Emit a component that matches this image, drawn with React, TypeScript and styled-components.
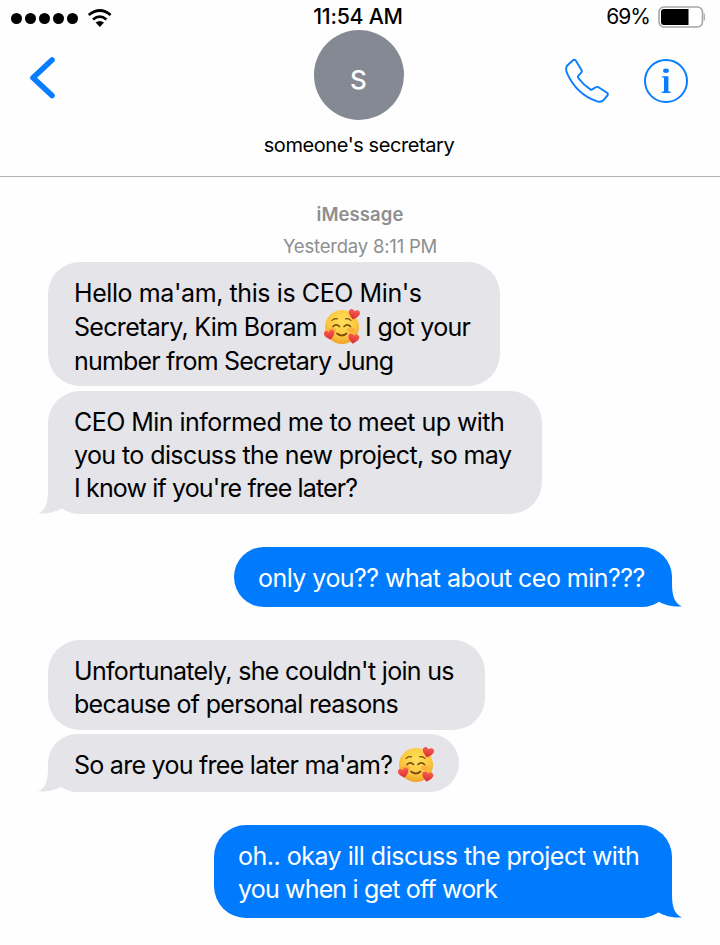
import React from "react";
import styled, { createGlobalStyle } from "styled-components";

const GlobalStyle = createGlobalStyle`
  body { margin: 0; background: #fefefe; }
  * { box-sizing: border-box; }
`;

const Screen = styled.main`
  width: 720px;
  height: 945px;
  overflow: hidden;
  background: #fefefe;
  color: #000;
  font-family: Inter, "Liberation Sans", sans-serif;
`;

const Header = styled.header`
  height: 177px;
  border-bottom: 1px solid #b2b2b2;
`;

const StatusBar = styled.div`
  display: grid;
  grid-template-columns: 1fr auto 1fr;
  align-items: center;
  height: 30px;
  padding: 3px 15px 0 11px;
`;

const Signal = styled.div`
  display: flex;
  align-items: center;
  gap: 3px;
  padding-top: 4px;
  svg { margin: -2px 0 0 6px; }
`;

const Dot = styled.span`
  width: 11px;
  height: 11px;
  border-radius: 50%;
  background: #000;
`;

const Clock = styled.span`
  margin-top: -1px;
  font-size: 21.3px;
  font-weight: 500;
  line-height: 26px;
  letter-spacing: -0.25px;
`;

const Power = styled.div`
  display: flex;
  justify-content: flex-end;
  align-items: center;
  gap: 8px;
  font-size: 21px;
  letter-spacing: -1px;
`;

const NavBar = styled.div`
  display: grid;
  grid-template-columns: 1fr 220px 1fr;
  padding: 0 32px 0 28px;
`;

const BackIcon = styled.svg`
  margin-top: 26px;
`;

const Contact = styled.div`
  display: flex;
  flex-direction: column;
  align-items: center;
  margin: 0 -2px 0 0;
`;

const Avatar = styled.div`
  display: flex;
  justify-content: center;
  width: 90px;
  height: 90px;
  padding: 32px 1px 0 0;
  border-radius: 50%;
  background: #858993;
  color: #fff;
  font-size: 26px;
  font-weight: 500;
  line-height: 36px;
`;

const ContactName = styled.div`
  margin-top: 12px;
  font-size: 20px;
  line-height: 26px;
  letter-spacing: -0.42px;
  white-space: nowrap;
`;

const Actions = styled.div`
  display: flex;
  justify-content: flex-end;
  gap: 34px;
  padding-top: 28px;
`;

const Thread = styled.section`
  display: flex;
  flex-direction: column;
  padding: 23px 48px 0;
`;

const Stamp = styled.div<{ $strong?: boolean; $spacing: number }>`
  height: 32px;
  text-align: center;
  color: #8e8e90;
  font-size: 18.5px;
  font-weight: ${(p) => (p.$strong ? 600 : 400)};
  line-height: 28px;
  letter-spacing: ${(p) => p.$spacing}px;
`;

const Bubble = styled.article<{ $sent?: boolean; $w: number; $h: number; $gap: number }>`
  position: relative;
  align-self: ${(p) => (p.$sent ? "flex-end" : "flex-start")};
  width: ${(p) => p.$w}px;
  height: ${(p) => p.$h}px;
  margin-top: ${(p) => p.$gap}px;
  padding: 14px 0 0 ${(p) => (p.$sent ? 24 : 26)}px;
  border-radius: 32px;
  background: ${(p) => (p.$sent ? "#007bfe" : "#e5e4e9")};
  color: ${(p) => (p.$sent ? "#fff" : "#000")};
  isolation: isolate;
`;

const Line = styled.div<{ $spacing: number; $height?: number }>`
  display: flex;
  align-items: center;
  height: ${(p) => p.$height ?? 33}px;
  font-size: 25px;
  letter-spacing: ${(p) => p.$spacing}px;
  white-space: pre;
`;

const TailShape = styled.svg<{ $sent?: boolean }>`
  position: absolute;
  z-index: -1;
  bottom: 0;
  ${(p) => (p.$sent ? "right: -10px; transform: scaleX(-1);" : "left: -10px;")}
`;

const Emoji = styled.svg<{ $before: number }>`
  flex: none;
  margin-left: ${(p) => p.$before}px;
  margin-right: 5px;
`;

const Tail = ({ sent }: { sent?: boolean }) => (
  <TailShape $sent={sent} width="44" height="32" viewBox="0 0 44 32" fill={sent ? "#007bfe" : "#e5e4e9"}>
    <path d="M10 0V8C10 20 8 28 0 31.5C9 32 18 30 24 26C30 30 36 32 44 32V0Z" />
  </TailShape>
);

const heart = "M0 5.5C-3 3-6 .8-6-2.2C-6-5.8-1.6-6.4 0-3.2C1.6-6.4 6-5.8 6-2.2C6 .8 3 3 0 5.5Z";

const LoveFace = ({ before }: { before: number }) => (
  <Emoji $before={before} width="36" height="36" viewBox="0 0 36 36">
    <defs>
      <radialGradient id="face" cx=".5" cy=".35" r=".65">
        <stop offset="0" stopColor="#ffe05a" />
        <stop offset=".65" stopColor="#fcc840" />
        <stop offset="1" stopColor="#efa126" />
      </radialGradient>
      <linearGradient id="heart" x2="0" y2="1">
        <stop stopColor="#fa5a50" />
        <stop offset="1" stopColor="#d92d35" />
      </linearGradient>
    </defs>
    <circle cx="18" cy="18" r="17" fill="url(#face)" />
    <ellipse cx="8" cy="21" rx="4" ry="2.5" fill="#f99b35" opacity=".55" />
    <ellipse cx="27" cy="21" rx="4" ry="2.5" fill="#f99b35" opacity=".55" />
    <g fill="none" stroke="#7b4a12" strokeWidth="1.7" strokeLinecap="round">
      <path d="M8 11.5Q10 9 13.5 9.8M21.5 9.8Q25 9 27 11.5" strokeWidth="1.2" />
      <path d="M9 17.5Q12.2 14.2 15.5 17.5M20 17.5Q23.2 14.2 26.5 17.5" />
      <path d="M13 24.5Q18 28.5 22.5 24.5" />
    </g>
    <g fill="url(#heart)">
      <path d={heart} transform="translate(30 5.5) rotate(12) scale(.93)" />
      <path d={heart} transform="translate(5.5 26) rotate(-12) scale(.88)" />
      <path d={heart} transform="translate(29.5 29.8) rotate(10) scale(.92)" />
    </g>
  </Emoji>
);

export default function App() {
  return (
    <Screen>
      <GlobalStyle />
      <Header>
        <StatusBar>
          <Signal>
            {[0, 1, 2, 3, 4].map((n) => <Dot key={n} />)}
            <svg width="26" height="20" viewBox="0 0 26 20" fill="none" stroke="#000" strokeWidth="2.7">
              <path d="M1.7 7Q13-2 23.6 7M6 11.5Q12.8 5.8 19.4 11.5" />
              <path d="M8.6 14.4Q12.8 11.4 17 14.4L12.8 18.9Z" fill="#000" stroke="none" />
            </svg>
          </Signal>
          <Clock>11:54 AM</Clock>
          <Power>
            69%
            <svg width="47" height="22" viewBox="0 0 47 22">
              <rect x="1" y="1" width="43.5" height="20" rx="5" fill="#fff" stroke="#a5a5a5" strokeWidth="1.6" />
              <path d="M6 3H30.5V19H6Q3 19 3 16V6Q3 3 6 3Z" />
              <path d="M46.3 7.5V14.5" stroke="#aaa" strokeWidth="1.2" />
            </svg>
          </Power>
        </StatusBar>
        <NavBar>
          <BackIcon width="30" height="44" viewBox="0 0 30 44" fill="none" stroke="#087dff" strokeWidth="5.6" strokeLinecap="round" strokeLinejoin="round">
            <path d="M24 4L5 21.8L24 39.5" />
          </BackIcon>
          <Contact>
            <Avatar>S</Avatar>
            <ContactName>someone's secretary</ContactName>
          </Contact>
          <Actions>
            <svg width="46" height="46" viewBox="0 0 46 46" fill="none" stroke="#087dff" strokeWidth="1.9" strokeLinejoin="round">
              <path d="M3 7.8L9 2.2Q10.3 1 11.7 2.4L17.5 12Q18.2 13.4 17.2 14.6L14.3 17.8Q13.5 18.8 14.5 20.2Q19.5 27 26.7 31.6Q27.7 32.1 28.7 31.1L31.8 29.2Q33 28.5 34.5 29.2L43 34.8Q44.5 36 43.5 37.5L38.8 42.8Q36.3 44.6 32.5 43.2Q12.7 36.5 3 15.2Q1.3 10.4 3 7.8Z" />
            </svg>
            <svg width="44" height="46" viewBox="0 0 44 46" fill="#087dff">
              <circle cx="22" cy="23" r="21" fill="none" stroke="#087dff" strokeWidth="2" />
              <ellipse cx="22" cy="12.8" rx="2.9" ry="2.2" />
              <path d="M18 18.3H24.4V33.6H26.5V34.9H17.8V33.6H20V19.6H18Z" />
            </svg>
          </Actions>
        </NavBar>
      </Header>
      <Thread>
        <Stamp $strong $spacing={0.08}>iMessage</Stamp>
        <Stamp $spacing={-0.2}>Yesterday 8:11 PM</Stamp>
        <Bubble $w={452} $h={124} $gap={-2}>
          <Line $height={34} $spacing={-0.41}>Hello ma'am, this is CEO Min's</Line>
          <Line $height={34} $spacing={-0.68}>Secretary, Kim Boram<LoveFace before={7} />I got your</Line>
          <Line $height={34} $spacing={-0.83}>number from Secretary Jung</Line>
        </Bubble>
        <Bubble $w={494} $h={123} $gap={5}>
          <Line $spacing={-0.54}>CEO Min informed me to meet up with</Line>
          <Line $spacing={-0.59}>you to discuss the new project, so may</Line>
          <Line $spacing={-0.86}>I know if you're free later?</Line>
          <Tail />
        </Bubble>
        <Bubble $sent $w={438} $h={60} $gap={33}>
          <Line $spacing={-0.53}>only you?? what about ceo min???</Line>
          <Tail sent />
        </Bubble>
        <Bubble $w={437} $h={90} $gap={33}>
          <Line $spacing={-0.68}>Unfortunately, she couldn't join us</Line>
          <Line $spacing={-0.69}>because of personal reasons</Line>
        </Bubble>
        <Bubble $w={411} $h={58} $gap={4}>
          <Line $spacing={-0.73}>So are you free later ma'am?<LoveFace before={6} /></Line>
          <Tail />
        </Bubble>
        <Bubble $sent $w={458} $h={93} $gap={33}>
          <Line $spacing={-0.5}>oh.. okay ill discuss the project with</Line>
          <Line $spacing={-0.83}>you when i get off work</Line>
          <Tail sent />
        </Bubble>
      </Thread>
    </Screen>
  );
}
